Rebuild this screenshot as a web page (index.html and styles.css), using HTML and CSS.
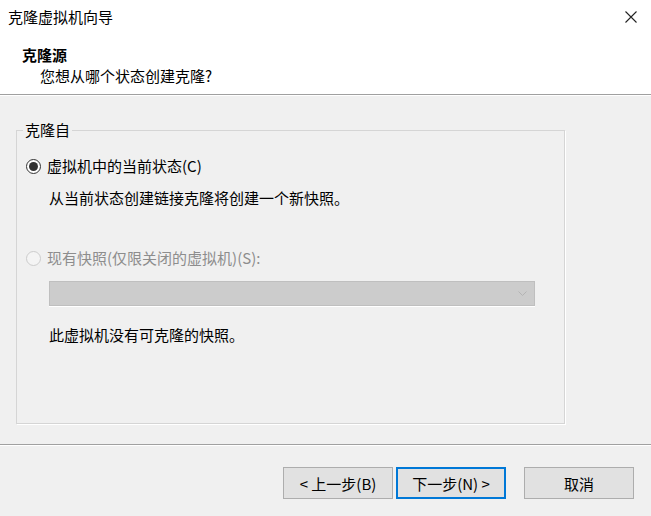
FILE: index.html
```html
<!DOCTYPE html>
<html lang="zh-CN">
<head>
    <meta charset="UTF-8">
    <meta name="viewport" content="width=device-width, initial-scale=1.0">
    <title>克隆虚拟机向导</title>
    <link rel="stylesheet" href="styles.css">
</head>
<body>
<div class="top">
    <div class="titlebar">
        <span class="title">克隆虚拟机向导</span>
        <svg class="close" width="12" height="12" viewBox="0 0 12 12">
            <path d="M0.5 0.5 L11.5 11.5 M11.5 0.5 L0.5 11.5" stroke="#222" stroke-width="1.1" fill="none"/>
        </svg>
    </div>
    <div class="header">
        <div class="head-title">克隆源</div>
        <div class="head-sub">您想从哪个状态创建克隆?</div>
    </div>
</div>
<div class="rule"></div>

<div class="main">
    <fieldset class="group">
        <legend class="group-label">克隆自</legend>
        <div class="group-body">
            <div class="option">
                <span class="radio checked"></span>
                <span>虚拟机中的当前状态(C)</span>
            </div>
            <p class="hint first-hint">从当前状态创建链接克隆将创建一个新快照。</p>

            <div class="option disabled second-option">
                <span class="radio"></span>
                <span>现有快照(仅限关闭的虚拟机)(S):</span>
            </div>
            <div class="select">
                <svg class="chevron" width="9" height="6" viewBox="0 0 9 6">
                    <path d="M0.5 0.5 L4.5 4.5 L8.5 0.5" stroke="#b4b4b4" stroke-width="1" fill="none"/>
                </svg>
            </div>
            <p class="hint note">此虚拟机没有可克隆的快照。</p>
        </div>
    </fieldset>
</div>
<div class="rule"></div>

<div class="footer">
    <button class="btn">&lt; 上一步(B)</button>
    <button class="btn btn-default">下一步(N) &gt;</button>
    <button class="btn btn-cancel">取消</button>
</div>
</body>
</html>
```

FILE: styles.css
```css
body{
    margin: 0;
    width: 651px;
    height: 516px;
    overflow: hidden;
    background-color: #f0f0f0;
    font-family: "Noto Sans CJK SC", "Noto Sans", sans-serif;
    font-size: 15px;
    color: #000;
}
.top{
    background-color: #fff;
    height: 94px;
}
.titlebar{
    height: 34px;
    display: flex;
    align-items: center;
    justify-content: space-between;
    padding: 0 14px 0 8px;
}
.title{
    font-size: 15px;
    line-height: 20px;
}
.header{
    padding-left: 22px;
    padding-top: 11px;
}
.head-title{
    font-weight: bold;
    line-height: 20px;
}
.head-sub{
    line-height: 20px;
    margin-top: 1px;
    padding-left: 18px;
}
.rule{
    border-top: 1px solid #a0a0a0;
    border-bottom: 1px solid #fff;
}
.main{
    height: 348px;
    box-sizing: border-box;
    padding: 24px 0 0 16px;
}
.group{
    box-sizing: border-box;
    width: 549px;
    height: 304px;
    margin: 0;
    padding: 0;
    border: 1px solid #d5d5d5;
    box-shadow: 1px 1px 0 #fff;
}
.group-label{
    margin-left: 6px;
    padding: 0 2px;
    line-height: 20px;
}
.group-body{
    padding: 16px 0 0 9px;
}
.option{
    display: flex;
    align-items: center;
    gap: 6px;
    line-height: 20px;
}
.radio{
    box-sizing: border-box;
    width: 15px;
    height: 15px;
    border-radius: 50%;
    border: 1px solid #333;
    background-color: #fff;
    display: flex;
    align-items: center;
    justify-content: center;
}
.radio.checked::after{
    content: "";
    width: 9px;
    height: 9px;
    border-radius: 50%;
    background-color: #333;
}
.disabled{
    color: #8d8d8d;
}
.disabled .radio{
    border-color: #cccccc;
    background-color: #f4f4f4;
}
.hint{
    margin: 0;
    padding-left: 23px;
    line-height: 20px;
}
.first-hint{
    margin-top: 12px;
}
.second-option{
    margin-top: 40px;
}
.select{
    box-sizing: border-box;
    margin: 13px 0 0 23px;
    width: 486px;
    height: 25px;
    background-color: #cccccc;
    border: 1px solid #bfbfbf;
    box-shadow: 0 1px 0 #fff;
    display: flex;
    align-items: center;
    justify-content: flex-end;
    padding-right: 7px;
}
.note{
    margin-top: 19px;
}
.footer{
    display: flex;
    justify-content: flex-end;
    padding: 21px 17px 0 0;
}
.btn{
    box-sizing: border-box;
    width: 110px;
    height: 32px;
    margin-left: 3px;
    background-color: #e1e1e1;
    border: 1px solid #adadad;
    font-family: "Noto Sans CJK SC", "Noto Sans", sans-serif;
    font-size: 15px;
    color: #000;
    padding: 0;
}
.btn-default{
    border: 2px solid #0078d7;
}
.btn-cancel{
    margin-left: 18px;
}
```
